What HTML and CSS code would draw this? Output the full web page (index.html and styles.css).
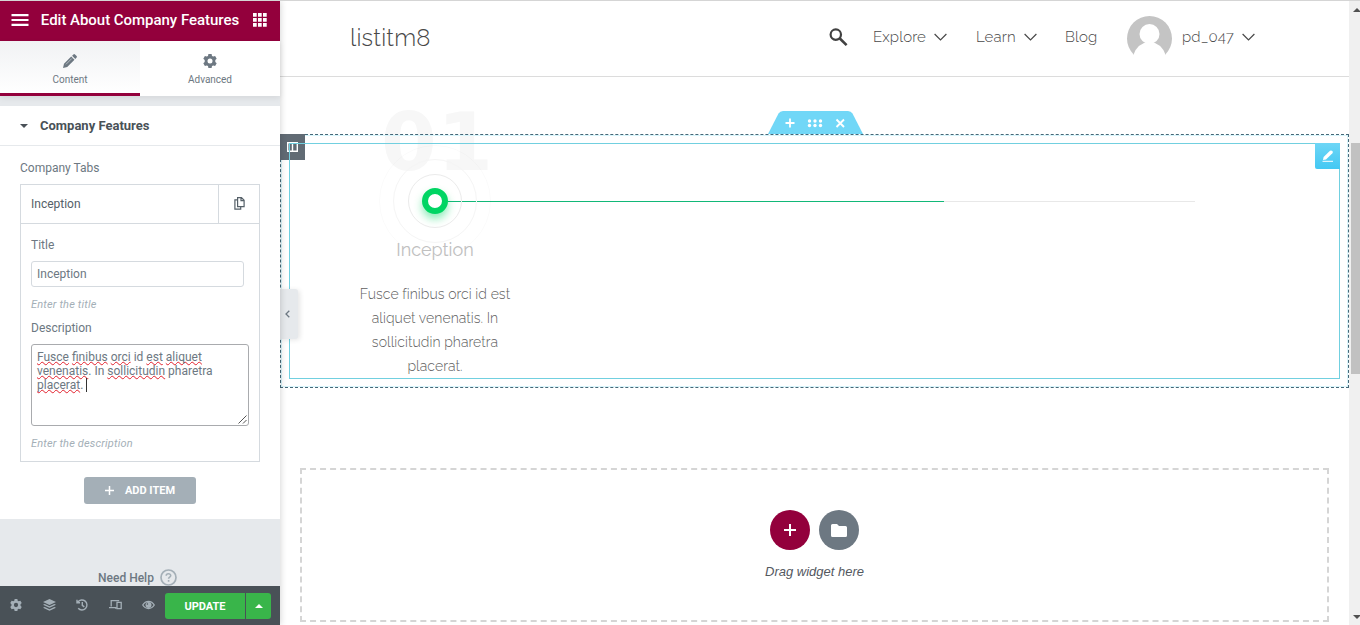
FILE: index.html
```html
<!DOCTYPE html>
<html lang="en">
<head>
<meta charset="utf-8">
<title>Edit About Company Features</title>
<link rel="stylesheet" href="styles.css">
</head>
<body>
<div class="app">
  <aside class="panel">
    <header class="panel-head">
      <svg class="menu-icon" width="18" height="12" viewBox="0 0 18 12"><path d="M.5 1.200h17M.5 6h17M.5 10.800h17" stroke="#fff" stroke-width="2.200"/></svg>
      <h1>Edit About Company Features</h1>
      <svg width="14" height="14" viewBox="0 0 14 14" fill="#fff"><path d="M0 0h3.700v3.700H0zM5 0h3.700v3.700H5zM10 0h3.700v3.700H10zM0 5h3.700v3.700H0zM5 5h3.700v3.700H5zM10 5h3.700v3.700H10zM0 10h3.700v3.700H0zM5 10h3.700v3.700H5zM10 10h3.700v3.700H10z"/></svg>
    </header>
    <nav class="tabs">
      <div class="tab active">
        <svg width="14" height="14" viewBox="0 0 14 14"><path d="M0 14l1-4.200L8.200 2.500l3.300 3.300L4.200 13zM9.100 1.700L10.400.4q.8-.7 1.600 0l1.600 1.600q.7.8 0 1.600l-1.300 1.300z" fill="#6d7882"/><path d="M3 10.300l5.800-5.800" stroke="#c5cacf" stroke-width=".8"/></svg>
        <span>Content</span>
      </div>
      <div class="tab">
        <svg width="14" height="14" viewBox="0 0 14 14"><use href="#gear"/></svg>
        <span>Advanced</span>
      </div>
    </nav>
    <section class="controls">
      <div class="section-title"><i class="caret-down"></i><h2>Company Features</h2></div>
      <div class="section-body">
        <div class="label repeater-label">Company Tabs</div>
        <div class="repeater">
          <div class="row-head">
            <div class="row-name">Inception</div>
            <div class="row-copy"><svg width="11" height="13" viewBox="0 0 11 13" fill="none" stroke="#556068" stroke-width="1.200"><path d="M3.600.7h3.900l2.600 2.600v6.300H3.600zM7 .8v2.800h3M3.500 2.800H.9v9.300h5.800V9.800"/></svg></div>
          </div>
          <div class="row-body">
            <div class="label">Title</div>
            <div class="input">Inception</div>
            <div class="hint">Enter the title</div>
            <div class="label desc-label">Description</div>
            <div class="textarea"><u>Fusce</u> <u>finibus</u> <u>orci</u> id <u>est</u> <u>aliquet</u><br><u>venenatis</u>. In <u>sollicitudin</u> pharetra<br><u>placerat</u>. <i class="cursor"></i>
              <svg class="grip" width="9" height="9" viewBox="0 0 9 9"><path d="M.5 8.500l8-8M5 8.500l3.500-3.500" stroke="#555" fill="none"/></svg>
            </div>
            <div class="hint">Enter the description</div>
          </div>
        </div>
        <div class="add-item"><svg width="9" height="9" viewBox="0 0 9 9"><path d="M4.500 0v9M0 4.500h9" stroke="#fff" stroke-width="1.500"/></svg><span>ADD ITEM</span></div>
      </div>
    </section>
    <div class="help"><span>Need Help</span><svg width="17" height="17" viewBox="0 0 17 17" fill="none" stroke="#a4afb7"><circle cx="8.500" cy="8.500" r="7.500" stroke-width="1.700"/><path d="M6.200 6.800c.1-3 4.700-2.600 4.500-.1-.1 1.500-2.100 1.300-2.100 3M8.600 11v1.700" stroke-width="1.600"/></svg></div>
    <footer class="panel-foot">
      <div class="tools">
        <svg width="12" height="12" viewBox="0 0 14 14"><use href="#gear"/></svg>
        <svg width="13" height="12" viewBox="0 0 13 12"><path d="M6.500 0L13 3 6.500 6 0 3zM0 5.800l1.700-.8 4.800 2.200L11.300 5l1.700.8-6.500 3zM0 8.800L1.700 8l4.800 2.200L11.300 8l1.700.8-6.500 3z"/></svg>
        <svg width="12" height="12" viewBox="0 0 12 12" fill="none" stroke="#a4afb7" stroke-width="1.400"><path d="M2.200 9.300A5 5 0 1 0 1.900 3M1 .8v3h3M6.300 3v3.300l2 1.600"/></svg>
        <svg width="13" height="11" viewBox="0 0 13 11" fill="none" stroke="#a4afb7" stroke-width="1.300"><path d="M2.200 7.500V1.600h8M0 8.700h6.600v1M8 3.300h4.200v6.400H8z"/></svg>
        <svg width="13" height="10" viewBox="0 0 13 10"><path fill-rule="evenodd" d="M0 5C3-.8 10-.8 13 5 10 10.500 3 10.500 0 5zm1.500 0c2.300 4 7.700 4 10 0-2.300-4-7.700-4-10 0z"/><circle cx="6.500" cy="4.900" r="3"/><circle cx="5.400" cy="4" r=".8" fill="#495157"/></svg>
      </div>
      <div class="update">UPDATE</div><div class="update-more"><i class="caret-up"></i></div>
    </footer>
  </aside>

  <main class="preview">
    <header class="site-head">
      <div class="brand">listitm8</div>
      <svg class="search" width="19" height="18" viewBox="0 0 19 18" fill="none" stroke="#414141"><circle cx="6.800" cy="6.600" r="5.200" stroke-width="2.200"/><path d="M10.600 10.300l7 6.800" stroke-width="2.600"/></svg>
      <nav class="site-nav">
        <span class="explore">Explore</span><svg class="chev" width="13" height="8" viewBox="0 0 13 8"><use href="#chev"/></svg>
        <span class="learn">Learn</span><svg class="chev" width="13" height="8" viewBox="0 0 13 8"><use href="#chev"/></svg>
        <span class="blog">Blog</span>
      </nav>
      <svg class="avatar" width="45" height="45" viewBox="0 0 45 45"><defs><clipPath id="disc"><circle cx="22.500" cy="22.500" r="22.500"/></clipPath></defs><g clip-path="url(#disc)"><path fill="#c4c4c4" d="M0 0h45v39H0z"/><circle cx="22.500" cy="18" r="10" fill="#fff"/><path d="M5 45Q7 31 17 27h11q10 4 12 18z" fill="#fff"/></g></svg>
      <span class="user">pd_047</span><svg class="chev" width="13" height="8" viewBox="0 0 13 8"><use href="#chev"/></svg>
    </header>

    <section class="edit-section">
      <div class="section-bar">
        <svg width="95" height="23" viewBox="0 0 95 23"><path d="M0 23L10.500 2.500Q12 0 15 0h65q3 0 4.500 2.500L95 23z" fill="#71d7f7"/><path d="M22 7.500v9M17.500 12h9" stroke="#fff" stroke-width="1.800"/><path d="M68.500 8.500l7.500 7.500M76 8.500L68.500 16" stroke="#fff" stroke-width="1.900"/><g fill="#fff"><circle cx="41.500" cy="10" r="1.700"/><circle cx="47" cy="10" r="1.700"/><circle cx="52.500" cy="10" r="1.700"/><circle cx="41.500" cy="14.500" r="1.700"/><circle cx="47" cy="14.500" r="1.700"/><circle cx="52.500" cy="14.500" r="1.700"/></g></svg>
      </div>
      <div class="column-handle"><svg width="11" height="10" viewBox="0 0 11 10"><path d="M.7.7h9.600v8.600H.7zM5.500.7v8.600" fill="none" stroke="#fff" stroke-width="1.400"/></svg></div>
      <div class="widget">
        <div class="widget-edit"><svg width="12" height="12" viewBox="0 0 12 12"><path d="M1 10l.6-3L8 .8q1.200-.9 2.300.2 1 1.200.1 2.300L4 9.500z" fill="#fff"/><path d="M.5 11.300h10.500" stroke="#fff"/></svg></div>
        <div class="feature">
          <div class="big-number">01</div>
          <div class="dot"><div class="halo"></div></div>
          <h3>Inception</h3>
          <p><span>Fusce finibus orci id est</span><span>aliquet venenatis. In</span><span>sollicitudin pharetra</span><span>placerat.</span></p>
        </div>
        <div class="track"><div class="progress"></div></div>
      </div>
    </section>

    <section class="drop-area">
      <div class="drop-buttons">
        <div class="round add"><svg width="12" height="12" viewBox="0 0 12 12"><path d="M6 0v12M0 6h12" stroke="#fff" stroke-width="2"/></svg></div>
        <div class="round"><svg width="16" height="13" viewBox="0 0 16 13"><path d="M1.500 0H6l2 2h6.500Q16 2 16 3.500v8q0 1.500-1.500 1.500h-13Q0 13 0 11.500v-10Q0 0 1.500 0z" fill="#fff"/></svg></div>
      </div>
      <div class="drop-text">Drag widget here</div>
    </section>
    <div class="collapse"><svg width="5" height="8" viewBox="0 0 5 8"><path d="M4.300.7L1 4l3.300 3.300" fill="none" stroke="#6d7882" stroke-width="1.300"/></svg></div>
  </main>
  <div class="scrollbar"><i class="caret-up"></i><div class="thumb"></div><i class="caret-down"></i></div>
</div>
<svg class="symbols" width="0" height="0"><defs>
  <g id="gear"><path fill-rule="evenodd" d="M5.400 0h3.200l.4 1.900 1.200.7 1.900-.7 1.600 2.800-1.400 1.400v1.800l1.400 1.400-1.600 2.800-1.900-.7-1.200.7-.4 1.900H5.400L5 12.100l-1.200-.7-1.900.7L.3 9.300l1.400-1.400V6.100L.3 4.700l1.600-2.800 1.900.7L5 1.900zM7 4.500a2.500 2.500 0 1 0 0 5 2.500 2.500 0 1 0 0-5z"/></g>
  <path id="chev" d="M.6 1l5.900 6 5.900-6" fill="none" stroke="#484848" stroke-width="1.200"/>
</defs></svg>
</body>
</html>
```
FILE: styles.css
```css
* { box-sizing: border-box; }
body { margin: 0; background: #fff; font-family: Roboto, "Liberation Sans", sans-serif; }
svg { display: block; flex: none; }
h1, h2, h3, p { margin: 0; }
.symbols { position: absolute; }
.app { display: flex; height: 625px; border-top: 1px solid #d5d5d5; overflow: hidden; }

.panel { width: 280px; flex: none; display: flex; flex-direction: column; background: #e6e9ec; position: relative; z-index: 2; box-shadow: 0 0 7px rgba(0,0,0,.2); }
.panel-head { height: 40px; flex: none; background: #93003c; display: flex; align-items: center; padding: 0 13px 2px 11px; }
.panel-head h1 { flex: 1; padding-right: 2px; text-align: center; color: #fff; font-size: 15px; font-weight: 500; line-height: 20px; white-space: nowrap; letter-spacing: -.03px; }
.tabs { display: flex; height: 55px; flex: none; background: #fff; box-shadow: 0 2px 6px rgba(0,0,0,.08); }
.tab { flex: 1; display: flex; flex-direction: column; align-items: center; padding-top: 13px; fill: #6d7882; color: #6d7882; font-size: 10px; }
.tab span { margin-top: 6px; line-height: 12px; letter-spacing: -.03px; }
.tab.active { background: linear-gradient(#f1f2f4, #fff); border-bottom: 3px solid #93003c; }
.controls { margin-top: 10px; height: 413px; flex: none; background: #fff; }
.section-title { height: 40px; border-bottom: 1px solid #e6e9ec; display: flex; align-items: center; padding-left: 20px; gap: 12px; }
.section-title h2 { font-size: 13px; font-weight: 700; color: #495157; line-height: 18px; }
.caret-down { border: 4px solid transparent; border-top-color: #495157; border-bottom: 0; }
.caret-up { border: 4px solid transparent; border-bottom-color: #fff; border-top: 0; }
.section-body { padding: 15px 20px 0; }
.label { font-size: 12px; line-height: 14px; color: #6d7882; }
.repeater { margin-top: 9px; border: 1px solid #d5dadf; height: 278px; }
.row-head { height: 39px; display: flex; border-bottom: 1px solid #d5dadf; }
.row-name { flex: 1; padding-left: 10px; font-size: 12px; line-height: 38px; color: #556068; }
.row-copy { width: 41px; padding-bottom: 2px; border-left: 1px solid #d5dadf; display: flex; align-items: center; justify-content: center; }
.row-body { padding: 14px 10px; }
.input { width: 213px; height: 26px; margin-top: 9px; padding-left: 5px; border: 1px solid #d5dadf; border-radius: 3px; font-size: 12px; line-height: 24px; color: #6d7882; }
.hint { margin-top: 11px; font-size: 11px; line-height: 14px; font-style: italic; color: #a4afb7; letter-spacing: .17px; }
.desc-label { margin-top: 9px; }
.textarea { position: relative; width: 218px; height: 82px; margin-top: 9px; padding: 5px; border: 1px solid #a9abae; border-radius: 3px; font-size: 12px; line-height: 14px; color: #6d7882; white-space: nowrap; }
.textarea u { text-decoration: underline wavy #e2202c 1px; text-underline-offset: 0; text-decoration-skip-ink: none; }
.cursor { display: inline-block; width: 1px; height: 14px; background: #333; vertical-align: top; }
.grip { position: absolute; right: 1px; bottom: 1px; }
.add-item { width: 112px; height: 27px; margin: 15px auto 0; border-radius: 3px; background: #a4afb7; color: #fff; display: flex; align-items: center; justify-content: center; gap: 11px; font-size: 11px; font-weight: 700; }
.help { flex: 1; display: flex; justify-content: center; align-items: center; gap: 6px; padding: 50px 5px 0 0; font-size: 12px; font-weight: 500; color: #6d7882; }
.panel-foot { height: 39px; flex: none; background: #495157; display: flex; align-items: center; padding-right: 9px; }
.tools { width: 165px; display: flex; justify-content: space-between; align-items: center; padding: 0 10px 2px; fill: #a4afb7; }
.update { width: 80px; height: 26px; background: #39b54a; border-radius: 3px 0 0 3px; color: #fff; font-size: 11px; font-weight: 700; text-align: center; line-height: 27px; }
.update-more { width: 25px; height: 26px; margin-left: 1px; background: #39b54a; border-radius: 0 3px 3px 0; display: flex; align-items: center; justify-content: center; }

.preview { flex: 1; position: relative; font-family: Raleway, Lato, "Open Sans", sans-serif; }
.site-head { height: 76px; border-bottom: 1px solid #dcdcdc; display: flex; align-items: center; padding: 0 94px 3px 70px; color: #484848; font-size: 15px; font-weight: 300; white-space: nowrap; }
.brand { width: 479px; padding-top: 2px; font-size: 24px; line-height: 32px; letter-spacing: .2px; }
.search { margin-right: 25px; }
.site-nav { display: flex; align-items: center; width: 254px; letter-spacing: .12px; }
.explore { width: 61px; }
.learn { width: 48px; margin-left: 29px; }
.blog { margin-left: 28px; }
.avatar { margin-top: 2px; margin-right: 10px; }
.user { width: 60px; letter-spacing: .12px; }

.edit-section { position: relative; margin-top: 57px; height: 254px; border: 1px dashed #456878; outline: 1px solid #d9f5fb; outline-offset: -2px; padding: 8px; }
.section-bar { position: absolute; left: 487px; top: -24px; }
.column-handle { position: absolute; left: -1px; top: -1px; width: 25px; height: 26px; background: #616b74; display: flex; align-items: center; justify-content: center; }
.widget { position: relative; width: 1051px; height: 236px; border: 1px solid #71d0e0; }
.widget-edit { position: absolute; right: -1px; top: -1px; width: 25px; height: 26px; background: linear-gradient(#6ed6f6, #43c8f3); border-radius: 0 0 0 2px; display: flex; align-items: center; justify-content: center; }
.feature { position: relative; width: 200px; margin-left: 45px; padding-top: 44px; text-align: center; }
.big-number { position: absolute; left: 46px; top: -48px; z-index: -1; font: bold 80px/93px "DejaVu Sans", sans-serif; letter-spacing: .5px; color: #f7f7f7; }
.dot { width: 26px; height: 26px; margin: 0 auto; border: 6px solid #00d563; border-radius: 50%; background: #fff; box-shadow: 0 5px 9px rgba(0,213,99,.45); position: relative; z-index: 1; }
.dot::before, .dot::after, .halo { content: ""; position: absolute; border-radius: 50%; }
.dot::before { inset: -20px; border: 1px solid #ebebeb; }
.dot::after { inset: -35px; border: 1px solid #f5f5f5; }
.halo { inset: -49px; border: 1px solid rgba(0,0,0,.02); }
.feature h3 { position: relative; z-index: 2; margin-top: 24px; font-size: 18px; line-height: 24px; font-weight: 400; color: #c0c0c0; }
.feature p { margin-top: 20px; font-size: 14px; line-height: 24px; font-weight: 300; letter-spacing: .06px; color: #606060; }
.feature p span { display: block; }
.track { position: absolute; left: 158px; top: 57px; width: 747px; height: 1px; background: #e8e8e8; }
.progress { width: 496px; height: 1px; background: #12b878; }

.drop-area { width: 1029px; height: 154px; margin: 80px 0 0 20px; border: 2px dashed #d5d5d5; padding-top: 40px; text-align: center; }
.drop-buttons { display: flex; justify-content: center; gap: 9px; }
.round { width: 40px; height: 40px; border-radius: 50%; background: #6d7882; display: flex; align-items: center; justify-content: center; }
.round.add { background: #93003c; }
.drop-text { margin-top: 13px; font: italic 13px/17px "Liberation Sans", sans-serif; color: #54595f; }
.collapse { position: absolute; left: 0; top: 288px; width: 18px; height: 50px; padding-right: 3px; background: #e6e9ec; border-radius: 0 3px 3px 0; box-shadow: 2px 1px 5px rgba(0,0,0,.1); display: flex; align-items: center; justify-content: center; }
.scrollbar { width: 11px; flex: none; background: #f0f0f0; display: flex; flex-direction: column; align-items: flex-end; justify-content: space-between; padding: 7px 0 6px 2px; overflow: hidden; }
.scrollbar .caret-up { border-bottom-color: #505050; margin-right: -1px; }
.scrollbar .caret-down { border-top-color: #505050; margin-right: -1px; }
.thumb { width: 9px; height: 231px; margin: 131px 0 auto; background: #c1c1c1; }
```
